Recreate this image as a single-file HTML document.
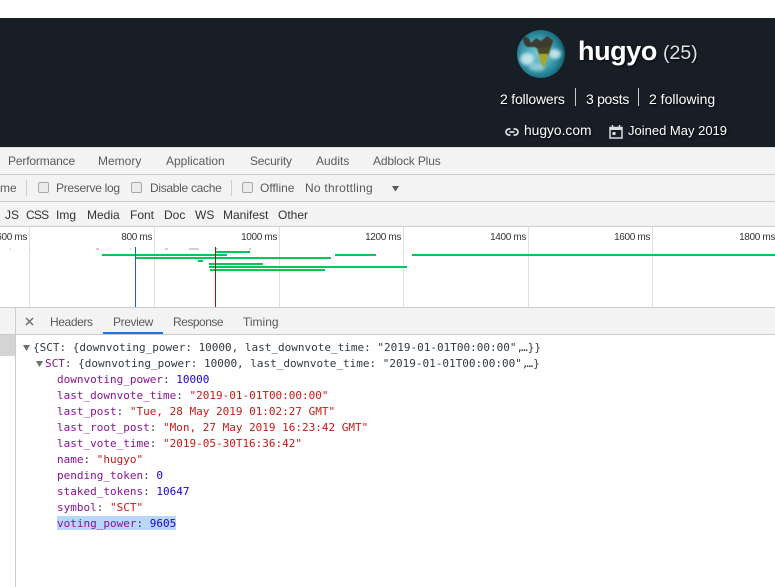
<!DOCTYPE html>
<html><head><meta charset="utf-8"><style>
html,body{margin:0;padding:0;background:#fff;}
body{width:775px;height:587px;overflow:hidden;position:relative;font-family:"Liberation Sans",sans-serif;}
div{position:absolute;white-space:nowrap;}
.h{color:#fff;text-shadow:1px 1px 2px rgba(0,0,0,.8);font-size:14px;line-height:18px;}
.t{font-size:12px;line-height:16px;color:#5a5a5a;}
.f{font-size:12px;line-height:16px;color:#333;top:207px;}
.r{font-size:10px;letter-spacing:-.35px;line-height:12px;color:#333;text-align:right;top:232px;width:70px;}
.g{background:#e0e0e0;width:1px;top:227px;height:80px;}
.b{background:#06c755;height:2px;}
.d{background:#cfcfcf;height:2px;top:248px;}
.c{width:9px;height:9px;border:1px solid #a8a8a8;border-radius:2px;background:#ececec;top:182px;}
.m{font-family:"DejaVu Sans Mono","Liberation Mono",monospace;font-size:11px;line-height:16px;color:#303942;}
.k{color:#881391;}.s{color:#c41a16;}.n{color:#1c00cf;}
.e{margin-left:-2px;}
</style></head><body>
<div style="left:0;top:18px;width:775px;height:129px;background:#171e26;"></div>

<svg style="position:absolute;left:517px;top:30px" width="48" height="48" viewBox="0 0 48 48">
<defs>
<radialGradient id="av" cx="45%" cy="50%" r="58%"><stop offset="0" stop-color="#7fc9d2"/><stop offset=".55" stop-color="#3f9fb2"/><stop offset=".85" stop-color="#1c7486"/><stop offset="1" stop-color="#0e4a5a"/></radialGradient>
<filter id="bl" x="-20%" y="-20%" width="140%" height="140%"><feGaussianBlur stdDeviation="1.500"/></filter>
<filter id="bs" x="-20%" y="-20%" width="140%" height="140%"><feGaussianBlur stdDeviation=".6"/></filter>
<clipPath id="cc"><circle cx="24" cy="24" r="24"/></clipPath>
</defs>
<circle cx="24" cy="24" r="24" fill="url(#av)"/>
<g clip-path="url(#cc)">
<ellipse cx="10" cy="29" rx="7" ry="6" fill="#dff2f4" opacity=".8" filter="url(#bl)"/>
<ellipse cx="38" cy="24" rx="6" ry="5" fill="#d7eef2" opacity=".85" filter="url(#bl)"/>
<ellipse cx="20" cy="37" rx="8" ry="4" fill="#bfe4e6" opacity=".6" filter="url(#bl)"/>
<g filter="url(#bs)">
<path d="M6 8 C10 5 13 9 14 13 L19 8 L24 11 L30 6 L36 10 L35 15 L31 20 L22 20 L18 17 L10 17 C7 15 6 11 6 8Z" fill="#3a3a30"/>
<path d="M20 18 L34 17 L31 26 L22 25 Z" fill="#4a4a26"/>
<path d="M21 24 L31 24 L29 33 L27 38 L24 33 Z" fill="#a9a62e"/>
</g>
</g>
</svg>

<div class="h" style="left:578px;top:33px;font-size:27px;line-height:36px;font-weight:bold;letter-spacing:-.4px;">hugyo</div>
<div class="h" style="left:663px;top:40px;font-size:19.500px;line-height:26px;color:#dfe1e4;">(25)</div>
<div class="h" style="left:500px;top:90px;letter-spacing:-.2px;">2 followers</div>
<div style="left:575px;top:88px;width:1px;height:18px;background:#c8cacc;"></div>
<div class="h" style="left:586px;top:90px;letter-spacing:-.3px;">3 posts</div>
<div style="left:638px;top:88px;width:1px;height:18px;background:#c8cacc;"></div>
<div class="h" style="left:649px;top:90px;">2 following</div>

<svg style="position:absolute;left:505px;top:127px" width="14" height="10" viewBox="0 0 14 10"><path d="M5.500 2H4a3 3 0 0 0 0 6h1.500M8.500 2H10a3 3 0 0 1 0 6H8.500M4.500 5h5" fill="none" stroke="#d8dde2" stroke-width="1.700"/></svg>
<div class="h" style="left:524px;top:122px;font-size:13.800px;">hugyo.com</div>
<svg style="position:absolute;left:609px;top:124px" width="14" height="15" viewBox="0 0 14 15"><path d="M1 3.500h12v10.500H1zM3.500 1v3M10.500 1v3" fill="none" stroke="#d8dde2" stroke-width="1.500"/><rect x="1" y="3" width="12" height="3" fill="#d8dde2"/><rect x="3.500" y="8" width="3" height="3" fill="#d8dde2"/></svg>
<div class="h" style="left:628px;top:122px;font-size:13px;">Joined May 2019</div>

<div style="left:0;top:148px;width:775px;height:78px;background:#f3f3f3;"></div>
<div style="left:0;top:174px;width:775px;height:1px;background:#ccc;"></div>
<div style="left:0;top:201px;width:775px;height:1px;background:#ccc;"></div>
<div style="left:0;top:226px;width:775px;height:1px;background:#ccc;"></div>
<div style="left:0;top:147px;width:775px;height:1px;background:#ddd;"></div>

<div class="t" style="left:8px;top:153px;letter-spacing:-.15px;">Performance</div>
<div class="t" style="left:98px;top:153px;">Memory</div>
<div class="t" style="left:166px;top:153px;">Application</div>
<div class="t" style="left:250px;top:153px;letter-spacing:-.2px;">Security</div>
<div class="t" style="left:316px;top:153px;">Audits</div>
<div class="t" style="left:373px;top:153px;letter-spacing:-.15px;">Adblock Plus</div>

<div class="t" style="left:0;top:180px;">me</div>
<div style="left:26px;top:180px;width:1px;height:16px;background:#ccc;"></div>
<div class="c" style="left:38px;"></div>
<div class="t" style="left:56px;top:180px;letter-spacing:-.3px;">Preserve log</div>
<div class="c" style="left:131px;"></div>
<div class="t" style="left:150px;top:180px;letter-spacing:-.3px;">Disable cache</div>
<div style="left:231px;top:180px;width:1px;height:16px;background:#ccc;"></div>
<div class="c" style="left:242px;"></div>
<div class="t" style="left:260px;top:180px;">Offline</div>
<div class="t" style="left:305px;top:180px;letter-spacing:.25px;">No throttling</div>
<svg style="position:absolute;left:392px;top:186px" width="7" height="6"><path d="M0 0H7L3.500 5.500Z" fill="#5a5a5a"/></svg>

<div class="f" style="left:5px;">JS</div>
<div class="f" style="left:26px;letter-spacing:-.8px;">CSS</div>
<div class="f" style="left:56px;">Img</div>
<div class="f" style="left:87px;">Media</div>
<div class="f" style="left:130px;">Font</div>
<div class="f" style="left:164px;">Doc</div>
<div class="f" style="left:195px;">WS</div>
<div class="f" style="left:223px;">Manifest</div>
<div class="f" style="left:278px;">Other</div>

<div class="g" style="left:29px;"></div><div class="g" style="left:154px;"></div>
<div class="g" style="left:279px;"></div><div class="g" style="left:403px;"></div>
<div class="g" style="left:528px;"></div><div class="g" style="left:652px;"></div>

<div class="r" style="left:-43px;">600 ms</div>
<div class="r" style="left:82px;">800 ms</div>
<div class="r" style="left:207px;">1000 ms</div>
<div class="r" style="left:331px;">1200 ms</div>
<div class="r" style="left:456px;">1400 ms</div>
<div class="r" style="left:580px;">1600 ms</div>
<div class="r" style="left:705px;">1800 ms</div>

<div class="d" style="left:10px;width:1px;"></div>
<div class="d" style="left:29px;width:1px;"></div>
<div class="d" style="left:96px;width:3px;"></div>
<div class="d" style="left:130px;width:1px;"></div>
<div class="d" style="left:165px;width:3px;"></div>
<div class="d" style="left:189px;width:10px;"></div>
<div class="d" style="left:216px;width:2px;"></div>
<div class="d" style="left:249px;width:2px;"></div>

<div class="b" style="left:216px;width:34px;top:251px;"></div>
<div class="b" style="left:102px;width:125px;top:254px;"></div>
<div class="b" style="left:135px;width:196px;top:257px;"></div>
<div class="b" style="left:335px;width:41px;top:254px;"></div>
<div class="b" style="left:412px;width:363px;top:254px;"></div>
<div class="b" style="left:198px;width:5px;top:260px;"></div>
<div class="b" style="left:209px;width:54px;top:263px;"></div>
<div class="b" style="left:209px;width:198px;top:266px;"></div>
<div class="b" style="left:210px;width:115px;top:269px;"></div>
<div class="b" style="left:226px;width:1px;top:254px;background:#18a0c8;"></div>
<div class="b" style="left:330px;width:1px;top:257px;background:#18a0c8;"></div>
<div class="b" style="left:375px;width:1px;top:254px;background:#18a0c8;"></div>
<div class="b" style="left:406px;width:1px;top:266px;background:#18a0c8;"></div>
<div class="b" style="left:324px;width:1px;top:269px;background:#18a0c8;"></div>

<div style="left:135px;top:247px;width:1px;height:60px;background:#1a5fb4;"></div>
<div style="left:215px;top:247px;width:1px;height:60px;background:#a31515;"></div>

<div style="left:0;top:307px;width:775px;height:27px;background:#f3f3f3;border-top:1px solid #ccc;box-sizing:border-box;"></div>
<div style="left:0;top:334px;width:775px;height:1px;background:#ccc;"></div>
<div style="left:0;top:335px;width:15px;height:21px;background:#d4d4d4;"></div>
<div style="left:15px;top:307px;width:1px;height:280px;background:#ccc;"></div>

<svg style="position:absolute;left:25px;top:317px" width="9" height="9"><path d="M1 1L8 8M8 1L1 8" stroke="#6e6e6e" stroke-width="1.500"/></svg>
<div class="t" style="left:50px;top:314px;letter-spacing:-.4px;">Headers</div>
<div class="t" style="left:113px;top:314px;letter-spacing:-.4px;">Preview</div>
<div style="left:103px;top:332px;width:60px;height:2px;background:#1a73e8;"></div>
<div class="t" style="left:173px;top:314px;letter-spacing:-.5px;">Response</div>
<div class="t" style="left:243px;top:314px;">Timing</div>

<svg style="position:absolute;left:23px;top:345px" width="7" height="6"><path d="M0 0H7L3.500 6Z" fill="#6e6e6e"/></svg>
<svg style="position:absolute;left:36px;top:361px" width="7" height="6"><path d="M0 0H7L3.500 6Z" fill="#6e6e6e"/></svg>
<div style="left:57px;top:516px;width:119px;height:14px;background:#b9d7fb;"></div>
<div class="m" style="left:33px;top:340px;">{SCT: {downvoting_power: 10000, last_downvote_time: "2019-01-01T00:00:00",<span class="e">…</span>}}</div>
<div class="m" style="left:45px;top:356px;"><span class="k">SCT</span>: {downvoting_power: 10000, last_downvote_time: "2019-01-01T00:00:00",<span class="e">…</span>}</div>
<div class="m" style="left:57px;top:372px;"><span class="k">downvoting_power</span>: <span class="n">10000</span></div>
<div class="m" style="left:57px;top:388px;"><span class="k">last_downvote_time</span>: <span class="s">"2019-01-01T00:00:00"</span></div>
<div class="m" style="left:57px;top:404px;"><span class="k">last_post</span>: <span class="s">"Tue, 28 May 2019 01:02:27 GMT"</span></div>
<div class="m" style="left:57px;top:420px;"><span class="k">last_root_post</span>: <span class="s">"Mon, 27 May 2019 16:23:42 GMT"</span></div>
<div class="m" style="left:57px;top:436px;"><span class="k">last_vote_time</span>: <span class="s">"2019-05-30T16:36:42"</span></div>
<div class="m" style="left:57px;top:452px;"><span class="k">name</span>: <span class="s">"hugyo"</span></div>
<div class="m" style="left:57px;top:468px;"><span class="k">pending_token</span>: <span class="n">0</span></div>
<div class="m" style="left:57px;top:484px;"><span class="k">staked_tokens</span>: <span class="n">10647</span></div>
<div class="m" style="left:57px;top:500px;"><span class="k">symbol</span>: <span class="s">"SCT"</span></div>
<div class="m" style="left:57px;top:516px;"><span class="k">voting_power</span>: <span class="n">9605</span></div>
</body></html>
